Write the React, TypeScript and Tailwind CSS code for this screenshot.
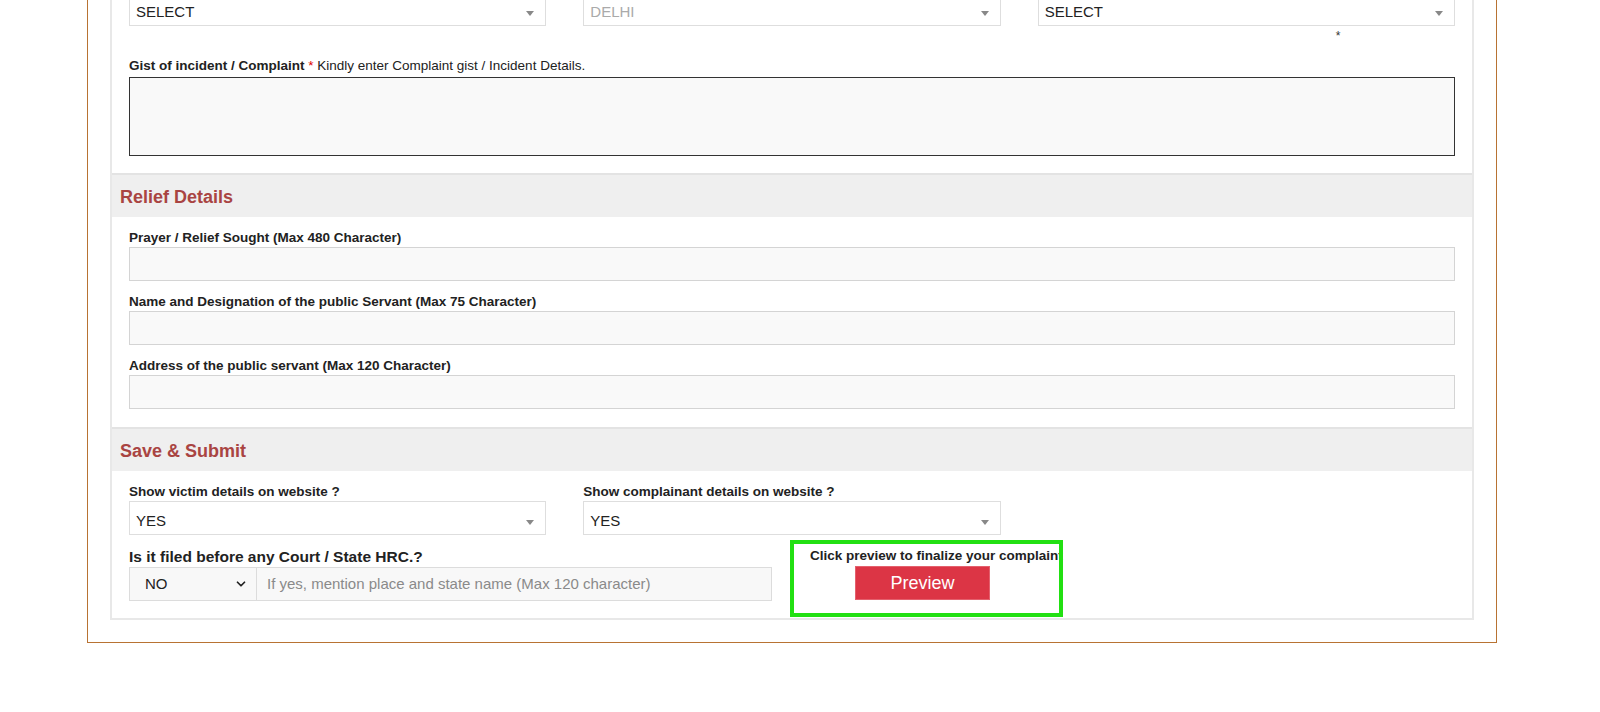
import { ChevronDown } from "lucide-react";

const Caret = () => (
  <span className="mt-[3px] w-0 h-0 border-x-[4px] border-x-transparent border-t-[5px] border-t-[#888]" />
);

const SelectBox = ({ value, muted }: { value: string; muted?: boolean }) => (
  <div className="h-[34px] border border-[#dedede] bg-white flex items-center justify-between pt-[6px] pl-[6px] pr-[11px]">
    <span className={`text-[15px] ${muted ? "text-[#aaa]" : "text-[#222]"}`}>{value}</span>
    <Caret />
  </div>
);

const Field = ({ label }: { label: string }) => (
  <div className="mb-[12px]">
    <label className="block text-[13.5px] leading-[18px] font-bold text-[#222]">{label}</label>
    <div className="h-[34px] border border-[#d4d4d4] bg-[#f9f9f9]" />
  </div>
);

const SectionHead = ({ title }: { title: string }) => (
  <div className="h-[44px] bg-[#efefef] border-t-2 border-[#e3e3e3] flex items-center pt-[2px] pl-[8px]">
    <h3 className="text-[18px] font-bold text-[#a94442]">{title}</h3>
  </div>
);

export default function App() {
  return (
    <div className="h-[712px] overflow-hidden bg-white font-['Liberation_Sans',Arial,sans-serif] text-[#222]">
      <div className="-mt-[8px] ml-[87px] w-[1410px] border-x border-b border-[#b87333] px-[22px] pb-[22px]">
        <div className="border-2 border-t-0 border-[#e8e8e8]">
          {/* complaint details (tail) */}
          <div className="px-[17px] pb-[17px]">
            <div className="grid grid-cols-3 gap-x-[37px]">
              <SelectBox value="SELECT" />
              <SelectBox value="DELHI" muted />
              <SelectBox value="SELECT" />
            </div>
            <div className="grid grid-cols-3 gap-x-[37px] h-[31px]">
              <div />
              <div />
              <div className="pl-[298px] pt-[2px] text-[12px] leading-[16px] text-[#333]">*</div>
            </div>
            <p className="text-[13.5px] leading-[18px]">
              <span className="font-bold">Gist of incident / Complaint</span>
              <span className="text-[#d00]"> *</span> Kindly enter Complaint gist / Incident Details.
            </p>
            <div className="mt-[2px] h-[79px] border border-[#333] bg-[#f9f9f9]" />
          </div>

          <SectionHead title="Relief Details" />
          <div className="px-[17px] pt-[12px] pb-[6px]">
            <Field label="Prayer / Relief Sought (Max 480 Character)" />
            <Field label="Name and Designation of the public Servant (Max 75 Character)" />
            <Field label="Address of the public servant (Max 120 Character)" />
          </div>

          <SectionHead title="Save & Submit" />
          <div className="px-[17px] pt-[12px] pb-[17px]">
            <div className="grid grid-cols-3 gap-x-[37px]">
              <div>
                <label className="block text-[13.5px] leading-[18px] font-bold">Show victim details on website ?</label>
                <SelectBox value="YES" />
              </div>
              <div>
                <label className="block text-[13.5px] leading-[18px] font-bold">Show complainant details on website ?</label>
                <SelectBox value="YES" />
              </div>
            </div>
            <div className="flex items-start mt-[5px]">
              <div className="w-[643px] pt-[8px]">
                <label className="block text-[15.5px] leading-[18px] font-bold mb-[1px]">Is it filed before any Court / State HRC.?</label>
                <div className="flex h-[34px]">
                  <div className="w-[128px] border border-[#dcdcdc] bg-[#f8f8f8] flex items-center justify-between pl-[15px] pr-[8px]">
                    <span className="text-[15px] text-[#222]">NO</span>
                    <ChevronDown size={14} strokeWidth={3} className="text-[#222]" />
                  </div>
                  <div className="flex-1 border border-l-0 border-[#dcdcdc] bg-[#f8f8f8] flex items-center pl-[10px]">
                    <span className="text-[15px] text-[#8a8a8a]">If yes, mention place and state name (Max 120 character)</span>
                  </div>
                </div>
              </div>
              <div className="relative ml-[18px] w-[273px] pt-[8px]">
                <p className="pl-[20px] whitespace-nowrap text-[13.5px] leading-[16px] font-bold">Click preview to finalize your complaint</p>
                <button className="mt-[2px] ml-[65px] w-[135px] h-[34px] bg-[#dc3545] border border-[#e4606d] text-white text-[18px]">
                  Preview
                </button>
                <div className="absolute left-0 top-0 w-[273px] h-[77px] border-[4px] border-[#22e012] pointer-events-none" />
              </div>
            </div>
          </div>
        </div>
      </div>
    </div>
  );
}
